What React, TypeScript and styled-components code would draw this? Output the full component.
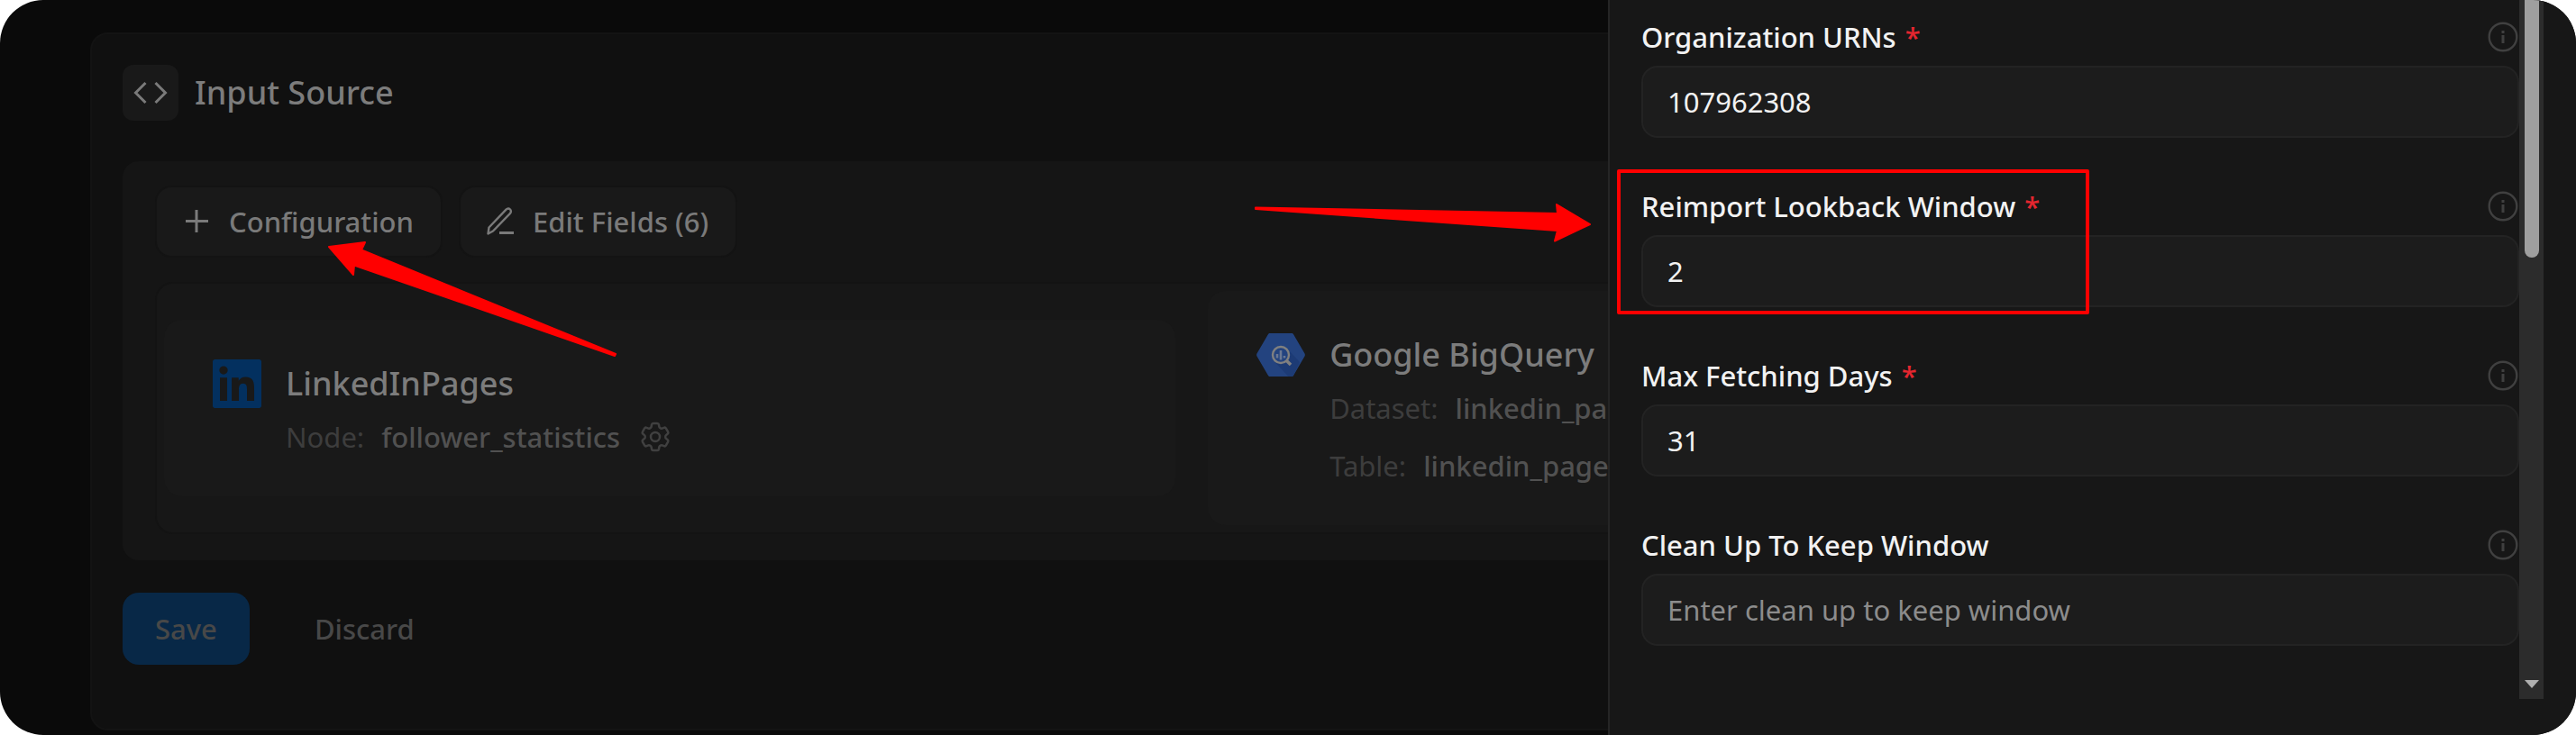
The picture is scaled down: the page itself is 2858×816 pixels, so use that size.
import React, { useId } from "react";
import styled, { createGlobalStyle } from "styled-components";

const GlobalStyle = createGlobalStyle`
  *, *::before, *::after { box-sizing: border-box; }
  body {
    margin: 0;
    background: #ffffff;
    font-family: "Noto Sans", sans-serif;
    font-size: 31px;
    line-height: 40px;
  }
  button, input { font: inherit; }
`;

const Shell = styled.div`
  position: relative;
  min-height: 100vh;
  padding: 36px 100px 0;
  overflow: hidden;
  border-radius: 48px;
  background: #0a0a0a;
`;

const SourceCard = styled.main`
  padding: 34px 34px 71px;
  border: 2px solid #131313;
  border-radius: 20px;
  background: #101010;
`;

const SourceHeader = styled.header`
  display: flex;
  align-items: center;
  gap: 18px;
  margin-bottom: 45px;
`;

const IconTile = styled.span`
  display: flex;
  align-items: center;
  justify-content: center;
  width: 62px;
  height: 62px;
  border-radius: 12px;
  background: #191919;
  color: #7a7a7a;
`;

const Heading = styled.h1`
  margin: 0;
  font-size: 36px;
  font-weight: 500;
  line-height: 52px;
  color: #7c7c7c;
`;

const Panel = styled.section`
  display: flex;
  flex-direction: column;
  gap: 27px;
  padding: 27px 36px 29px;
  border-radius: 18px;
  background: #151515;
`;

const Toolbar = styled.div`
  display: flex;
  gap: 18px;
`;

const ToolSlot = styled.div`
  position: relative;
`;

const ToolButton = styled.button`
  display: flex;
  align-items: center;
  gap: 20px;
  height: 80px;
  padding: 0 30px 0 28px;
  border: 2px solid #131313;
  border-radius: 18px;
  background: #191919;
  font-weight: 500;
  color: #7a7a7a;
`;

const Mapping = styled.div`
  display: grid;
  grid-template-columns: 21fr 25fr;
  align-items: center;
  gap: 36px;
  padding: 8px;
  border: 2px solid #131313;
  border-radius: 20px;
  background: #171717;
`;

const Endpoint = styled.article`
  display: grid;
  grid-template-columns: 54px 1fr;
  align-items: center;
  column-gap: 27px;
  padding: 44px 54px 46px;
  border-radius: 20px;
  background: #191919;
`;

const EndpointName = styled.h2`
  margin: 0;
  font-size: 36px;
  font-weight: 500;
  line-height: 54px;
  color: #7c7c7c;
`;

const Details = styled.dl`
  grid-column: 2;
  display: flex;
  flex-direction: column;
  gap: 24px;
  margin: 12px 0 0;
`;

const Detail = styled.div`
  display: flex;
  align-items: center;
  gap: 19px;
`;

const DetailLabel = styled.dt`
  color: #3d3d3d;
`;

const DetailValue = styled.dd`
  margin: 0;
  font-weight: 500;
  color: #515151;
`;

const IconButton = styled.button`
  display: flex;
  padding: 0;
  border: 0;
  background: none;
  color: #404040;
`;

const Actions = styled.footer`
  display: flex;
  gap: 36px;
  margin-top: 36px;
`;

const ActionButton = styled.button<{ $primary?: boolean }>`
  height: 80px;
  padding: 0 36px;
  border: 0;
  border-radius: 18px;
  background: ${(p) => (p.$primary ? "#082847" : "transparent")};
  font-weight: 500;
  color: #484848;
`;

const Drawer = styled.aside`
  position: absolute;
  top: 0;
  right: 0;
  bottom: 0;
  display: flex;
  width: 1074px;
  max-width: 100%;
  padding: 0 36px 40px 35px;
  border-left: 2px solid #252525;
  background: #171717;
`;

const Form = styled.form`
  flex: 1;
  display: flex;
  flex-direction: column;
  gap: 58px;
  padding-top: 23px;
`;

const FieldBox = styled.div`
  position: relative;
  display: flex;
  flex-direction: column;
  gap: 14px;
`;

const LabelRow = styled.div`
  display: flex;
  align-items: center;
  justify-content: space-between;
  height: 36px;
`;

const Label = styled.label`
  font-weight: 500;
  color: #f2f2f2;
`;

const Required = styled.span`
  margin-left: 10px;
  color: #e5262f;
`;

const TextInput = styled.input`
  width: 100%;
  height: 80px;
  padding: 0 27px;
  border: 2px solid #232323;
  border-radius: 18px;
  outline: none;
  background: #1c1c1c;
  color: #f2f2f2;

  &::placeholder {
    color: #8c8c8c;
    opacity: 1;
  }
`;

const ScrollTrack = styled.div`
  display: flex;
  flex-direction: column;
  align-items: center;
  justify-content: space-between;
  width: 27px;
  padding-bottom: 12px;
  background: #2c2c2c;
`;

const ScrollThumb = styled.div`
  width: 16px;
  height: 286px;
  border-radius: 0 0 8px 8px;
  background: #9f9f9f;
`;

const ScrollArrow = styled.div`
  border: 8px solid transparent;
  border-top: 9px solid #b0b0b0;
  border-bottom: 0;
`;

const Highlight = styled.div`
  position: absolute;
  top: -23px;
  left: -27px;
  width: 524px;
  height: 161px;
  border: 4px solid #ff0000;
  border-radius: 2px;
  pointer-events: none;
`;

const DiagonalArrow = styled.svg`
  position: absolute;
  top: 60px;
  left: 190px;
  z-index: 1;
  fill: #ff0000;
  stroke: #ff0000;
  stroke-linejoin: round;
  pointer-events: none;
`;

const StraightArrow = styled.svg`
  position: absolute;
  top: 14px;
  right: 100%;
  margin-right: 52px;
  fill: #ff0000;
  stroke: #ff0000;
  stroke-linejoin: round;
  pointer-events: none;
`;

const CodeIcon = () => (
  <svg width="40" height="40" viewBox="0 0 40 40" fill="none" stroke="currentColor" strokeWidth="3" aria-hidden="true">
    <path d="M14.5 9 3.5 20l11 11M25.5 9l11 11-11 11" />
  </svg>
);

const PlusIcon = () => (
  <svg width="32" height="32" viewBox="0 0 32 32" fill="none" stroke="currentColor" strokeWidth="3" aria-hidden="true">
    <path d="M16 3v25M4 15.500h25" />
  </svg>
);

const PencilIcon = () => (
  <svg width="32" height="32" viewBox="0 0 32 32" fill="none" stroke="currentColor" strokeWidth="2.4" strokeLinejoin="round" aria-hidden="true">
    <path d="M2.500 29.500 3.500 22.500 22.500 2.700c1.400-1.400 3.300-1.400 4.500-.2s1.200 3.200-.2 4.600L8 26.500z" />
    <path d="M15 28.500h16" strokeWidth="3" />
  </svg>
);

const GearIcon = () => (
  <svg width="40" height="40" viewBox="0 0 24 24" fill="none" stroke="currentColor" strokeWidth="1.500" strokeLinecap="round" strokeLinejoin="round" aria-hidden="true">
    <path d="M9.594 3.940c.090-.542.560-.940 1.110-.940h2.593c.550 0 1.020.398 1.110.940l.213 1.281c.063.374.313.686.645.870.074.040.147.083.220.127.325.196.720.257 1.075.124l1.217-.456a1.125 1.125 0 0 1 1.370.490l1.296 2.247a1.125 1.125 0 0 1-.260 1.431l-1.003.827c-.293.241-.438.613-.430.992a7.723 7.723 0 0 1 0 .255c-.008.378.137.750.430.991l1.004.827c.424.350.534.955.260 1.430l-1.298 2.247a1.125 1.125 0 0 1-1.369.491l-1.217-.456c-.355-.133-.750-.072-1.076.124a6.470 6.470 0 0 1-.220.128c-.331.183-.581.495-.644.869l-.213 1.281c-.090.543-.560.940-1.110.940h-2.594c-.550 0-1.019-.398-1.110-.940l-.213-1.281c-.062-.374-.312-.686-.644-.870a6.520 6.520 0 0 1-.220-.127c-.325-.196-.720-.257-1.076-.124l-1.217.456a1.125 1.125 0 0 1-1.369-.490l-1.297-2.247a1.125 1.125 0 0 1 .260-1.431l1.004-.827c.292-.240.437-.613.430-.991a6.932 6.932 0 0 1 0-.255c.007-.380-.138-.751-.430-.992l-1.004-.827a1.125 1.125 0 0 1-.260-1.430l1.297-2.247a1.125 1.125 0 0 1 1.370-.491l1.216.456c.356.133.751.072 1.076-.124.072-.044.146-.086.220-.128.332-.183.582-.495.644-.869l.214-1.280Z" />
    <circle cx="12" cy="12" r="3" />
  </svg>
);

const InfoIcon = () => (
  <svg width="36" height="36" viewBox="0 0 36 36" fill="none" stroke="currentColor" aria-hidden="true">
    <circle cx="18" cy="18" r="15.300" strokeWidth="2.400" />
    <path d="M18 11v3M18 16v9" strokeWidth="3" />
  </svg>
);

const LinkedInLogo = () => (
  <svg width="54" height="54" viewBox="0 0 24 24" fill="#03305f" aria-hidden="true">
    <path d="M20.447 20.452h-3.554v-5.569c0-1.328-.027-3.037-1.852-3.037-1.853 0-2.136 1.445-2.136 2.939v5.667H9.351V9h3.414v1.561h.046c.477-.900 1.637-1.850 3.370-1.850 3.601 0 4.267 2.370 4.267 5.455v6.286zM5.337 7.433a2.062 2.062 0 0 1-2.063-2.065 2.064 2.064 0 1 1 2.063 2.065zm1.782 13.019H3.555V9h3.564v11.452zM22.900 0H1.100C.500 0 0 .500 0 1.100v21.800C0 23.500.500 24 1.100 24h21.800c.600 0 1.100-.500 1.100-1.100V1.100C24 .500 23.500 0 22.900 0z" />
  </svg>
);

const BigQueryLogo = () => (
  <svg width="54" height="54" viewBox="0 0 54 54" aria-hidden="true">
    <path d="M15 3h24c1 0 1.600.300 2.100 1.200l12.400 21.300c.500.900.500 2.100 0 3L41.100 49.800c-.500.900-1.100 1.200-2.100 1.200H15c-1 0-1.600-.300-2.100-1.200L.500 28.500c-.500-.900-.500-2.100 0-3L12.900 4.200C13.400 3.300 14 3 15 3z" fill="#23437f" />
    <path d="M34.500 20.500 48 35l-6.900 14.800c-.500.900-1.100 1.200-2.100 1.200h-3.500L20 34.500l14-4z" fill="#1d3b75" />
    <circle cx="27" cy="27" r="9" fill="#23437f" stroke="#808080" strokeWidth="2.400" />
    <path d="M23 26v4.500M27 22v10.500M31 28v2.500" stroke="#6a7894" strokeWidth="2.600" />
    <path d="m33.500 33.500 4.500 4.500" stroke="#808080" strokeWidth="3.600" />
  </svg>
);

interface FieldProps {
  label: string;
  value?: string;
  placeholder?: string;
  required?: boolean;
  children?: React.ReactNode;
}

const Field = ({ label, value, placeholder, required, children }: FieldProps) => {
  const id = useId();
  return (
    <FieldBox>
      <LabelRow>
        <Label htmlFor={id}>
          {label}
          {required && <Required>*</Required>}
        </Label>
        <IconButton type="button" aria-label={`About ${label}`}>
          <InfoIcon />
        </IconButton>
      </LabelRow>
      <TextInput id={id} type="text" defaultValue={value} placeholder={placeholder} />
      {children}
    </FieldBox>
  );
};

export default function App() {
  return (
    <>
      <GlobalStyle />
      <Shell>
        <SourceCard>
          <SourceHeader>
            <IconTile>
              <CodeIcon />
            </IconTile>
            <Heading>Input Source</Heading>
          </SourceHeader>
          <Panel>
            <Toolbar>
              <ToolSlot>
                <ToolButton type="button">
                  <PlusIcon />
                  Configuration
                </ToolButton>
                <DiagonalArrow width="326" height="134" viewBox="0 0 326 134" aria-hidden="true">
                  <path d="M3 8 43 3l-4 8.500L321 127l-1 2L31 28.500 30 39z" strokeWidth="2" />
                </DiagonalArrow>
              </ToolSlot>
              <ToolButton type="button">
                <PencilIcon />
                Edit Fields (6)
              </ToolButton>
            </Toolbar>
            <Mapping>
              <Endpoint>
                <LinkedInLogo />
                <EndpointName>LinkedInPages</EndpointName>
                <Details>
                  <Detail>
                    <DetailLabel>Node:</DetailLabel>
                    <DetailValue>follower_statistics</DetailValue>
                    <IconButton type="button" aria-label="Node settings">
                      <GearIcon />
                    </IconButton>
                  </Detail>
                </Details>
              </Endpoint>
              <Endpoint>
                <BigQueryLogo />
                <EndpointName>Google BigQuery</EndpointName>
                <Details>
                  <Detail>
                    <DetailLabel>Dataset:</DetailLabel>
                    <DetailValue>linkedin_pages</DetailValue>
                  </Detail>
                  <Detail>
                    <DetailLabel>Table:</DetailLabel>
                    <DetailValue>linkedin_pages</DetailValue>
                  </Detail>
                </Details>
              </Endpoint>
            </Mapping>
          </Panel>
          <Actions>
            <ActionButton type="button" $primary>
              Save
            </ActionButton>
            <ActionButton type="button">Discard</ActionButton>
          </Actions>
        </SourceCard>
        <Drawer>
          <Form>
            <Field label="Organization URNs" value="107962308" required />
            <Field label="Reimport Lookback Window" value="2" required>
              <Highlight />
              <StraightArrow width="380" height="50" viewBox="0 0 380 50" aria-hidden="true">
                <path d="M4 5.500 339 12l-1-10 37 22-39 18.500 3-11.500L4 7z" strokeWidth="2" />
              </StraightArrow>
            </Field>
            <Field label="Max Fetching Days" value="31" required />
            <Field label="Clean Up To Keep Window" placeholder="Enter clean up to keep window" />
          </Form>
          <ScrollTrack>
            <ScrollThumb />
            <ScrollArrow />
          </ScrollTrack>
        </Drawer>
      </Shell>
    </>
  );
}
